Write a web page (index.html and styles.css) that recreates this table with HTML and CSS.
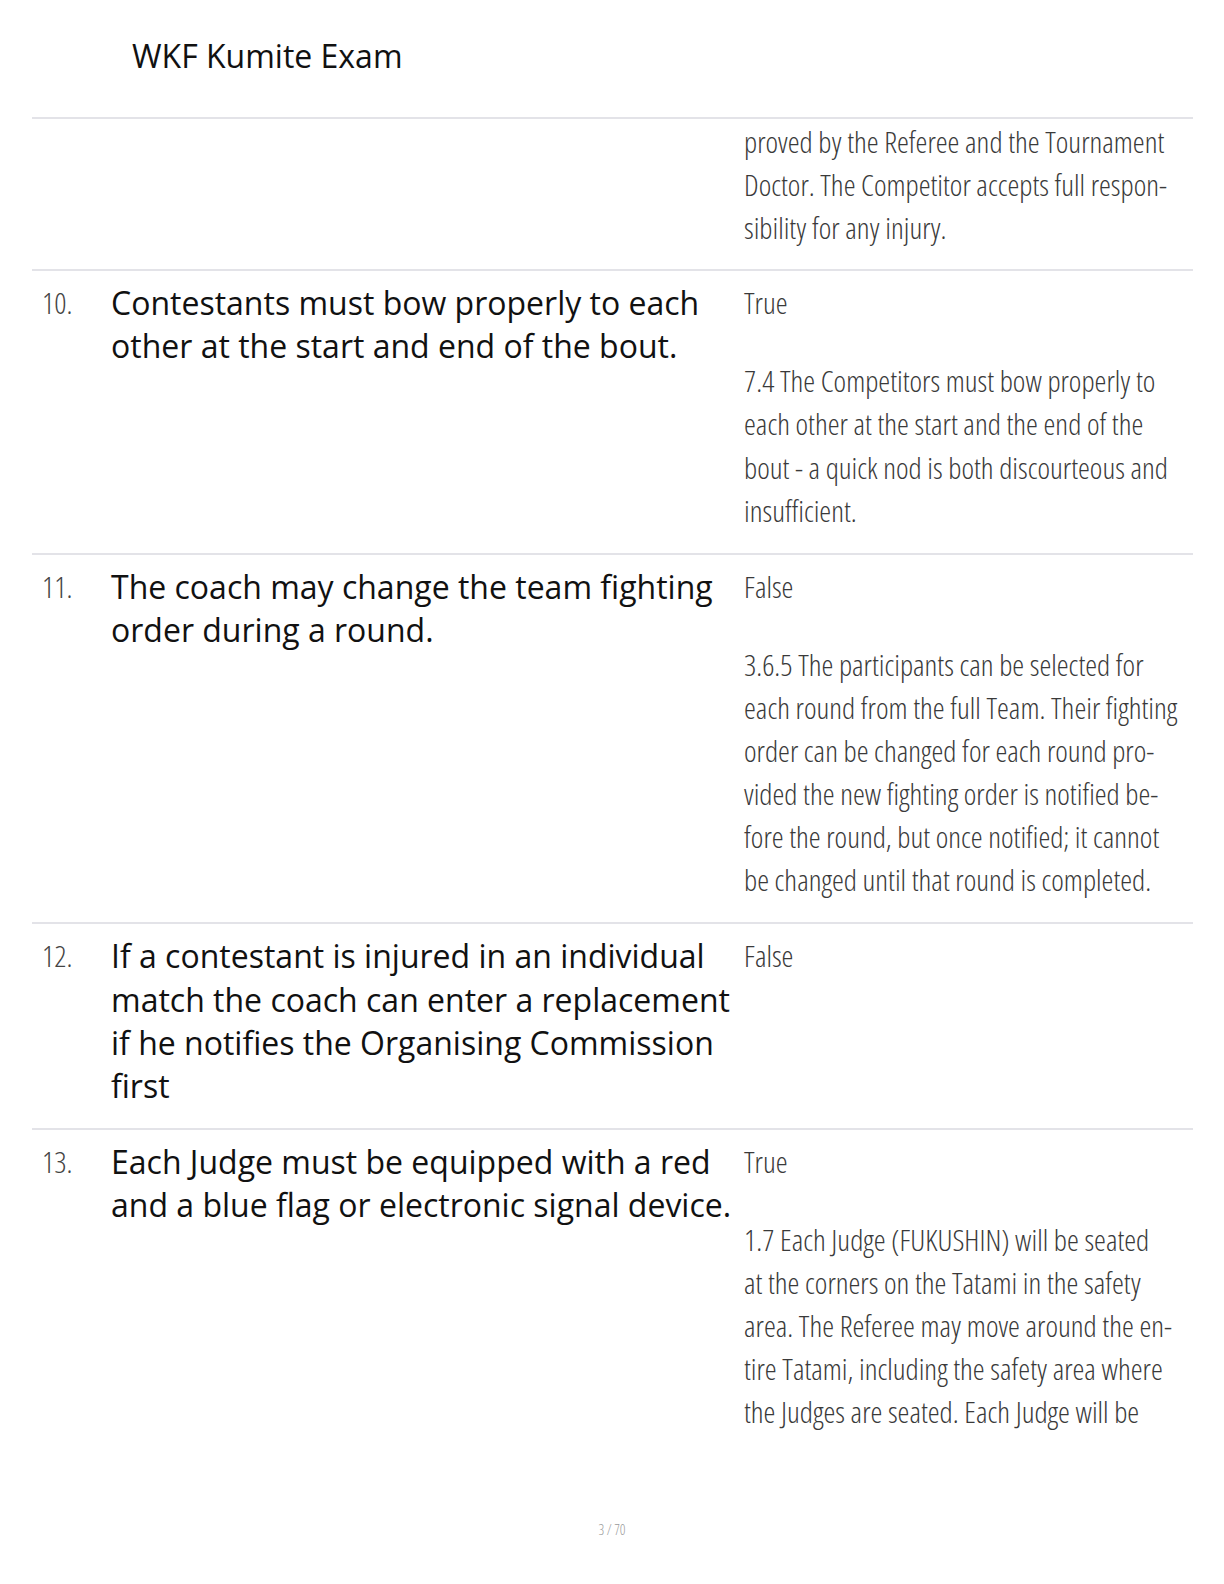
FILE: index.html
```html
<!DOCTYPE html>
<html lang="en">
<head>
<meta charset="utf-8">
<title>WKF Kumite Exam</title>
<link rel="stylesheet" href="styles.css">
</head>
<body>
<div class="page">
  <header class="header"><h1 class="title">WKF Kumite Exam</h1></header>
  <div class="sheet">
    <div class="row row-cont">
      <div class="num"></div>
      <div class="question"></div>
      <div class="answer">
        <p class="expl">proved by the Referee and the Tournament<br>Doctor. The Competitor accepts full respon-<br>sibility for any injury.</p>
      </div>
    </div>
    <div class="row">
      <div class="num">10.</div>
      <div class="question">Contestants must bow properly to each<br>other at the start and end of the bout.</div>
      <div class="answer">
        <p class="verdict">True</p>
        <p class="expl">7.4 The Competitors must bow properly to<br>each other at the start and the end of the<br>bout - a quick nod is both discourteous and<br>insufficient.</p>
      </div>
    </div>
    <div class="row">
      <div class="num">11.</div>
      <div class="question">The coach may change the team fighting<br>order during a round.</div>
      <div class="answer">
        <p class="verdict">False</p>
        <p class="expl">3.6.5 The participants can be selected for<br>each round from the full Team. Their fighting<br>order can be changed for each round pro-<br>vided the new fighting order is notified be-<br>fore the round, but once notified; it cannot<br>be changed until that round is completed.</p>
      </div>
    </div>
    <div class="row">
      <div class="num">12.</div>
      <div class="question">If a contestant is injured in an individual<br>match the coach can enter a replacement<br>if he notifies the Organising Commission<br>first</div>
      <div class="answer">
        <p class="verdict">False</p>
      </div>
    </div>
    <div class="row row-last">
      <div class="num">13.</div>
      <div class="question">Each Judge must be equipped with a red<br>and a blue flag or electronic signal device.</div>
      <div class="answer">
        <p class="verdict">True</p>
        <p class="expl">1.7 Each Judge (FUKUSHIN) will be seated<br>at the corners on the Tatami in the safety<br>area. The Referee may move around the en-<br>tire Tatami, including the safety area where<br>the Judges are seated. Each Judge will be</p>
      </div>
    </div>
  </div>
  <footer class="footer">3 / 70</footer>
</div>
</body>
</html>
```
FILE: styles.css
```css
html, body {
  margin: 0;
  padding: 0;
  background: #ffffff;
}

body {
  font-family: "Open Sans", "DejaVu Sans", sans-serif;
  color: #111111;
  width: 1224px;
  height: 1584px;
  overflow: hidden;
}

.page {
  display: flex;
  flex-direction: column;
  height: 1584px;
}

.header {
  height: 117px;
  box-sizing: border-box;
  padding: 34px 0 0 132px;
}

.title {
  margin: 0;
  font-size: 32px;
  font-weight: 400;
  line-height: 44px;
  color: #111111;
}

.sheet {
  margin: 0 31px 0 32px;
  border-top: 2px solid #e3e3e8;
}

.row {
  display: grid;
  grid-template-columns: 79px 633px 1fr;
  padding: 10px 0 21px;
  border-bottom: 2px solid #e3e3e8;
  line-height: 43.1px;
}

.row-cont {
  padding-top: 1px;
  padding-bottom: 20px;
}

.row-last {
  border-bottom: none;
}

.num {
  padding-left: 10px;
  font-size: 30px;
  font-weight: 300;
  font-stretch: 75%;
  color: #444444;
}

.question {
  font-size: 32px;
  color: #111111;
  white-space: nowrap;
}

.answer {
  font-size: 30px;
  font-weight: 300;
  font-stretch: 75%;
  color: #3a3a3a;
  white-space: nowrap;
}

.verdict {
  margin: 0 0 35px;
}

.expl {
  margin: 0;
}

.footer {
  margin-top: auto;
  margin-bottom: 45px;
  text-align: center;
  font-size: 14px;
  font-weight: 300;
  font-stretch: 75%;
  color: #9a9a9a;
}
```
